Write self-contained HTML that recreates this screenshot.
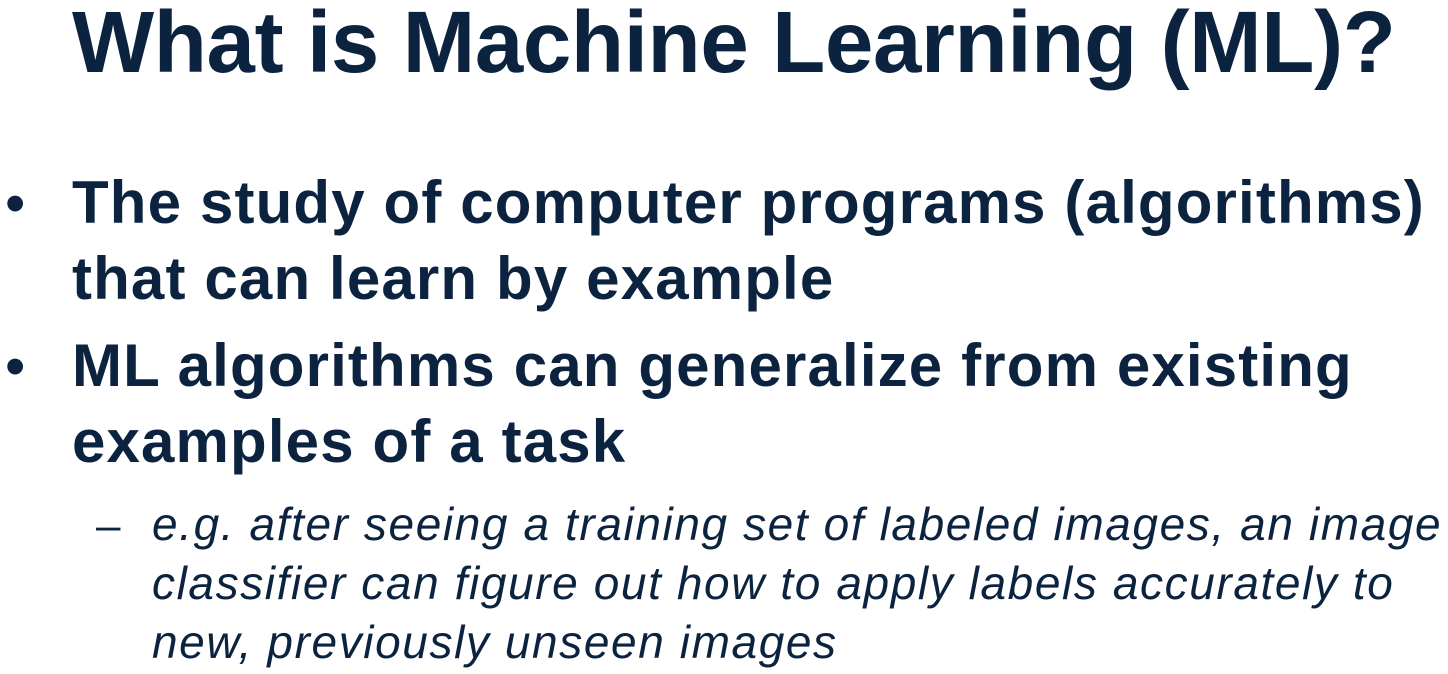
<!DOCTYPE html>
<html><head><meta charset="utf-8"><style>
body{margin:0;width:1448px;height:674px;background:#fff;overflow:hidden;position:relative;font-family:"Liberation Sans",Arial,sans-serif;color:#0c2340}
.t{position:absolute;left:72px;top:-12px;font-size:87px;font-weight:bold;white-space:nowrap;line-height:110px;letter-spacing:-0.35px}
.b{position:absolute;left:72px;font-size:60px;font-weight:bold;white-space:nowrap;line-height:76px;letter-spacing:1.15px}
.d{position:absolute;left:5px;font-size:58px;line-height:76px}
.s{position:absolute;left:152px;font-size:46px;font-style:italic;white-space:nowrap;line-height:59px;letter-spacing:1.6px}
.m{position:absolute;left:96px;font-size:44px;line-height:59px}
</style></head><body>
<div class="t">What is Machine Learning (ML)?</div>
<div class="d" style="top:166px">•</div>
<div class="b" style="top:165px">The study of computer programs (algorithms)<br>that can learn by example</div>
<div class="d" style="top:329px">•</div>
<div class="b" style="top:328px">ML algorithms can generalize from existing<br>examples of a task</div>
<div class="m" style="top:496px">–</div>
<div class="s" style="top:495px">e.g. after seeing a training set of labeled images, an image<br>classifier can figure out how to apply labels accurately to<br>new, previously unseen images</div>
</body></html>
